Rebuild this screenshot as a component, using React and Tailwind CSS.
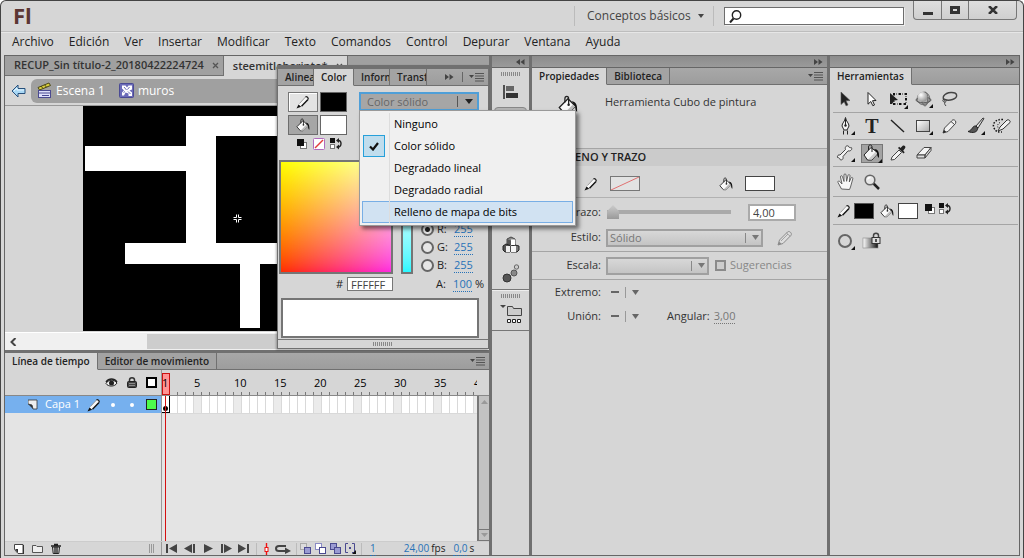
import { useState } from 'react';
import clsx from 'clsx';

const MENUS = ['Archivo', 'Edición', 'Ver', 'Insertar', 'Modificar', 'Texto', 'Comandos', 'Control', 'Depurar', 'Ventana', 'Ayuda'];
const FILL_TYPES = ['Ninguno', 'Color sólido', 'Degradado lineal', 'Degradado radial', 'Relleno de mapa de bits'];
const FRAMES = Array.from({ length: 40 }, (_, i) => i + 1);

/* ---------- icons ---------- */

function Svg({ w = 16, h = 16, className, children }) {
  return (
    <svg width={w} height={h} viewBox={`0 0 ${w} ${h}`} className={clsx('shrink-0', className)} fill="none" aria-hidden="true">
      {children}
    </svg>
  );
}

function PencilThin({ className }) {
  return (
    <Svg w={14} h={14} className={className}>
      <path d="M1.500 12.500L3 9l6.500-7c1-1 3.500.8 2.500 2.400L5.500 11z" fill="#f8f8f8" />
      <path d="M3.500 8.500L9.500 2" stroke="#888" strokeWidth=".8" />
      <path d="M5.500 11.300L12 4.500" stroke="#111" strokeWidth="1.400" />
      <path d="M9.500 2c1-1 3.500.8 2.500 2.400" stroke="#222" strokeWidth="1.300" />
      <path d="M.5 13.500L2.500 9.500l2.700 2.200z" fill="#111" />
    </Svg>
  );
}

function Pencil({ muted }) {
  const ink = muted ? '#8a8a8a' : '#444';
  return (
    <Svg>
      <path d="M1 15l1.500-5L10.500 2c1.500-1.500 5 1 3.500 3.300L6 13.500z" fill="#ddd" stroke={ink} />
      <path d="M1 15l1.300-3.300 2.200 2z" fill={ink} />
      <path d="M9.500 3l3.800 3.300M4 11l7-7" stroke={ink} strokeWidth=".7" />
    </Svg>
  );
}

function Bucket({ size = 14 }) {
  return (
    <svg width={size} height={size} viewBox="0 0 16 16" fill="none" className="shrink-0" aria-hidden="true">
      <path d="M1 10l7-7 6 6-6 5.500H5z" fill="#fafafa" stroke="#222" />
      <path d="M5 14.500L11.500 8 14 9l-5.500 5.500z" fill="#bbb" />
      <path d="M5.500 6V3c0-2.500 3-2.500 3 0v4.500" stroke="#222" />
      <circle cx="8.500" cy="7.800" r="1" fill="#222" />
      <path d="M11 5c3 .4 4.600 2 4.300 8.500-1.200-.8-1.600-2.500-1.500-4.500z" fill="#111" />
    </svg>
  );
}

function DefaultColors() {
  return (
    <Svg w={12} h={12}>
      <rect x="4.500" y="4.500" width="6" height="6" fill="#fff" stroke="#777" />
      <rect x="1" y="1" width="7" height="7" fill="#111" />
    </Svg>
  );
}

function NoColor() {
  return (
    <Svg w={12} h={12}>
      <rect x=".5" y=".5" width="11" height="11" rx="1" fill="#fff" stroke="#b06bbd" />
      <path d="M2 10l8-8" stroke="#e23b3b" strokeWidth="1.500" />
    </Svg>
  );
}

function SwapColors() {
  return (
    <Svg w={13} h={12}>
      <rect x="0" y="0" width="5" height="5" fill="#111" />
      <rect x=".5" y="6.500" width="4" height="4" fill="#fff" stroke="#777" />
      <path d="M8 2.500c4-.5 4 6.500 0 6.500" stroke="#222" strokeWidth="1.400" />
      <path d="M6 2.500L9 0v5zM6 9l3-2.500v5z" fill="#222" />
    </Svg>
  );
}

function Chevrons({ left, className }) {
  return (
    <Svg w={9} h={6} className={className}>
      {left
        ? <path d="M4 0L0 3l4 3zM8.500 0l-4 3 4 3z" fill="#444" />
        : <path d="M0 0l4 3-4 3zM4.500 0l4 3-4 3z" fill="#444" />}
    </Svg>
  );
}

function PanelMenu() {
  return (
    <button aria-label="Opciones del panel" className="flex">
      <Svg w={15} h={9}>
        <path d="M0 2h5L2.500 5z" fill="#444" />
        <path d="M6 .5h9M6 3h9M6 5.500h9M6 8h9" stroke="#555" />
      </Svg>
    </button>
  );
}

function Caret({ className }) {
  return (
    <svg viewBox="0 0 9 6" preserveAspectRatio="none" className={clsx('shrink-0', className)} aria-hidden="true">
      <path d="M0 0h9L4.500 6z" fill="currentColor" />
    </svg>
  );
}

function Grip({ className }) {
  return (
    <Svg w={20} h={4} className={className}>
      <path d="M.5 0v4M2.500 0v4M4.500 0v4M6.500 0v4M8.500 0v4M10.500 0v4M12.500 0v4M14.500 0v4M16.500 0v4M18.500 0v4" stroke="#888" />
    </Svg>
  );
}

const corner = <path d="M19 15v4h-4z" fill="#111" />;

// 20x20 tool glyphs
const TOOL_ICONS = {
  select: <path d="M5 3l9 8.500-4 .3 2 4.200-2 .8-1.800-4L5 15.500z" fill="#222" stroke="#555" strokeWidth=".6" />,
  subselect: <path d="M6 3.500l8 8-3.500.2 2 4.300-1.700.7-2-4.200-2.800 2.700z" fill="#fff" stroke="#222" />,
  transform: (
    <>
      <rect x="6" y="5" width="12" height="10" stroke="#222" strokeDasharray="1 1" />
      <path d="M2 4l8 7-3.500.5L4 15H2z" fill="#222" />
      <path d="M5 4h2v2H5zM11 4h2v2h-2zM17 4h2v2h-2zM17 9h2v2h-2zM11 14h2v2h-2zM5 14h2v2H5zM16 14h2v2h-2z" fill="#111" />
      <path d="M20 16v4h-4z" fill="#111" />
    </>
  ),
  rotate3d: (
    <>
      <circle cx="9.500" cy="9.500" r="6.300" fill="url(#ball)" stroke="#777" />
      <ellipse cx="9.500" cy="11" rx="7.500" ry="2.800" stroke="#555" />
      <ellipse cx="11" cy="10" rx="2.800" ry="7" stroke="#666" />
      <circle cx="8.500" cy="8" r="5" fill="url(#ball)" />
      {corner}
    </>
  ),
  lasso: (
    <>
      <path d="M5 11.500C1 9 4 4 11 3.500c7-.3 7.500 5 1.500 7-3 1-5.500 1-7.500 0" stroke="#444" strokeWidth="1.400" />
      <path d="M5 10c-3 0-3 3 0 3 2-.4 1.500-2.500 0-2.500M5 13c-1 2 0 2.500 1 4" stroke="#444" />
    </>
  ),
  pen: (
    <>
      <path d="M9.500 1.500c.5 4 3.500 5.500 3.500 8.500l-2 4H8l-2-4c0-3 3-4.500 3.500-8.500z" fill="#f5f5f5" stroke="#222" />
      <path d="M9.500 3v6M7.500 14.500v4M11.500 14.500v4" stroke="#222" />
      <circle cx="9.500" cy="9.500" r="1.200" fill="#222" />
      {corner}
    </>
  ),
  line: <path d="M3 4l13 12" stroke="#222" strokeWidth="1.400" />,
  rect: (
    <>
      <rect x="2.500" y="4.500" width="13" height="11" fill="url(#shade)" stroke="#444" />
      {corner}
    </>
  ),
  pencil: (
    <>
      <path d="M3 17l1.500-5L12 4.500c1.500-2 5 .5 3.500 3L8 15.500z" fill="#f2f2f2" stroke="#444" />
      <path d="M3 17l1.200-3 2 1.800z" fill="#222" />
      <path d="M11 5.500L14.500 8.500" stroke="#444" />
    </>
  ),
  brush: (
    <>
      <path d="M17 2l-7 8 2 2 6-9.500z" fill="#ddd" stroke="#333" />
      <path d="M10 10c-4-.5-3 4-8 5.500 5 2 9.500 1 9.800-3.500z" fill="#555" stroke="#222" />
      {corner}
    </>
  ),
  spray: (
    <>
      <path d="M6 15l2-4 7-7c1.500-1 4 1 3 2.500L11 13z" fill="#f2f2f2" stroke="#333" />
      <path d="M11 3.500C3 3 0 8 2 12s4 4 8 4" stroke="#111" strokeWidth="1.500" strokeDasharray="1.500 1.500" />
      <path d="M8 6.500c-2 1-3 3-2 5" stroke="#111" strokeDasharray="1 1.500" />
    </>
  ),
  bone: (
    <>
      <path d="M4 12l5.500-5.500C8.500 3.500 11 2 12.500 3.200c.3 1.500 1.500 1.500 3 1.500C16.500 7 14 8.500 12 7.800L7 13.500c.7 3-1.500 4-3 3-.3-1.500-1-1.800-2.500-2C1 12.500 2.500 11.500 4 12z" fill="#f2f2f2" stroke="#444" />
      {corner}
    </>
  ),
  bucket: (
    <>
      <path d="M2 12l7-7.500 7 5.500-6 7H5.500z" fill="#f5f5f5" stroke="#222" />
      <path d="M6 16.500l8-8 2 1.500-6 6.500z" fill="#ccc" />
      <path d="M6.500 7V4c0-2.800 3.500-2.800 3.500 0v5" stroke="#222" />
      <path d="M12 6c4 0 5.500 3 5 9-1.500-1-2-3-2-5z" fill="#111" />
      <path d="M20 16v4h-4z" fill="#111" />
    </>
  ),
  dropper: (
    <>
      <path d="M3 17l1-3 7-7 2.500 2.500-7 7z" fill="#f2f2f2" stroke="#444" />
      <path d="M10 5l5.500 5.500 1.200-1.200-1.500-1.600 2-2.700c.8-1.500-1-3.200-2.500-2.200L12.500 5l-1.300-1.200z" fill="#222" />
    </>
  ),
  eraser: (
    <>
      <path d="M3 12l7-7.500h7L11 12z" fill="#f5f5f5" stroke="#444" />
      <path d="M3 12h8v3H3zM11 12l6-7.500v3L11 15z" fill="#ddd" stroke="#444" />
    </>
  ),
  hand: (
    <path d="M5.500 17L2 10.500c-.7-1.300 1-2 1.800-1L6 12 4.500 5c-.2-1.500 1.500-1.800 2-.3L8 9.500 8 3c0-1.500 2-1.500 2 0l.6 6.300L12 3.500c.3-1.500 2.200-1 2 .5L13.300 10l1.700-4c.6-1.200 2.200-.6 1.800.8L14.500 15l-1 2.500z" fill="#f8f8f8" stroke="#555" strokeWidth=".9" />
  ),
  zoom: (
    <>
      <path d="M11 11l6 6" stroke="#222" strokeWidth="2.500" />
      <circle cx="8" cy="8" r="4.800" fill="#e6e6e6" stroke="#666" strokeWidth="1.600" />
      <path d="M5.500 7.500c.5-1.500 1.500-2 3-2" stroke="#fff" strokeWidth="1.300" />
    </>
  ),
  circle: (
    <>
      <circle cx="9" cy="10" r="6" stroke="#666" strokeWidth="2" />
      {corner}
    </>
  ),
  lockfill: (
    <>
      <rect x="1" y="7" width="15" height="10" fill="url(#lockgrad)" stroke="#888" strokeWidth=".6" />
      <path d="M11.500 7V4.500c0-3 5-3 5 0V7" stroke="#444" strokeWidth="1.500" />
      <rect x="10" y="6.500" width="8" height="6" fill="#ddd" stroke="#333" />
      <path d="M14 8v3" stroke="#222" strokeWidth="1.500" />
    </>
  ),
};

function Gradients() {
  return (
    <svg width="0" height="0" className="absolute" aria-hidden="true">
      <defs>
        <radialGradient id="ball" cx=".35" cy=".3" r=".8"><stop stopColor="#fff" /><stop offset="1" stopColor="#888" /></radialGradient>
        <linearGradient id="shade" x2="1" y2="1"><stop stopColor="#fff" /><stop offset="1" stopColor="#aaa" /></linearGradient>
        <linearGradient id="lockgrad"><stop stopColor="#fff" /><stop offset="1" stopColor="#111" /></linearGradient>
      </defs>
    </svg>
  );
}

/* ---------- shared pieces ---------- */

function Tab({ active, className, children }) {
  return (
    <button className={clsx('h-full overflow-hidden whitespace-nowrap border-b border-r border-r-[#707070] px-[7px] text-left text-[10px] font-semibold leading-4',
      active ? 'border-b-[#d6d6d6] bg-[#d6d6d6] text-[#222]' : 'border-b-[#707070] bg-[#a3a3a3] text-[#222]', className)}>
      {children}
    </button>
  );
}

function TabBar({ children, end }) {
  return (
    <div className="flex h-[17px] shrink-0 bg-linear-to-b from-[#a8a8a8] to-[#9c9c9c]">
      {children}
      <div className="flex flex-1 items-center justify-end gap-1.5 border-b border-[#707070] pr-1">{end}</div>
    </div>
  );
}

function DockBar({ left }) {
  return (
    <div className="flex h-3 shrink-0 items-center justify-end border-b border-[#666] bg-linear-to-b from-[#8c8c8c] to-[#9a9a9a] pr-1">
      <Chevrons left={left} />
    </div>
  );
}

function Scrub({ muted, children, label }) {
  return (
    <button aria-label={label} className={clsx('border-b border-dotted leading-[14px]', muted ? 'border-[#777] text-[#777]' : 'border-[#2672b8] text-[#2672b8]')}>
      {children}
    </button>
  );
}

function Dropdown({ id, label, value, options, className, caretClass }) {
  return (
    <span className={clsx('relative flex', className)}>
      <select id={id} aria-label={label} defaultValue={value}
        className="h-[18px] w-full appearance-none border-2 border-[#a0a0a0] bg-linear-to-b from-[#d8d8d8] to-[#c4c4c4] pl-[2px] leading-[14px] text-[#777]">
        {options.map((o) => <option key={o}>{o}</option>)}
      </select>
      <span className="pointer-events-none absolute inset-y-1 right-1 flex w-[14px] items-center justify-end border-l border-[#888]">
        <Caret className={caretClass} />
      </span>
    </span>
  );
}

/* ---------- window header ---------- */

function TitleBar() {
  return (
    <div className="flex h-[31px] shrink-0 items-start border-b border-[#bdbdbd] pl-3 pr-1.5 shadow-[0_1px_0_#e6e6e6]">
      <h1 className="text-[22px] font-bold leading-7 text-[#5c3634]">Fl</h1>
      <div className="ml-auto flex h-[30px] items-center">
        <div className="flex h-5 w-[140px] items-center gap-[7px] border-x border-[#bbb] pl-3 text-[#444]">
          <button className="text-xs">Conceptos básicos</button>
          <Caret className="h-[4px] w-[6px]" />
        </div>
        <label className="ml-[10px] flex h-[18px] w-[180px] items-center border border-[#6d6d6d] bg-white pl-1 shadow-[1px_1px_0_#eee]">
          <Svg w={13} h={13}>
            <circle cx="7.500" cy="5" r="4.200" stroke="#222" strokeWidth="1.400" />
            <path d="M4.500 8.500L1 12.500" stroke="#222" strokeWidth="2" />
          </Svg>
          <input type="search" aria-label="Buscar" className="w-full bg-transparent px-1 outline-none" />
        </label>
      </div>
      <div className="ml-[9px] flex h-[19px] divide-x divide-[#777] overflow-hidden rounded-b border border-t-0 border-[#777] bg-linear-to-b from-[#dedede] to-[#cfcfcf]">
        <button aria-label="Minimizar" className="flex w-7 items-center justify-center"><Svg w={10} h={12}><path d="M0 8h10v3H0z" fill="#333" /></Svg></button>
        <button aria-label="Maximizar" className="flex w-[27px] items-center justify-center"><Svg w={10} h={8}><rect x="1.500" y="1.500" width="7" height="5" stroke="#333" strokeWidth="3" /></Svg></button>
        <button aria-label="Cerrar" className="flex w-[47px] items-center justify-center"><Svg w={10} h={8}><path d="M1 0l8 8M9 0L1 8" stroke="#333" strokeWidth="2.500" /></Svg></button>
      </div>
    </div>
  );
}

function MenuBar() {
  return (
    <nav className="flex h-[23px] shrink-0 items-start gap-[15px] pl-[11px] pt-px text-xs text-[#222]">
      {MENUS.map((m) => <button key={m} className="leading-[18px]">{m}</button>)}
    </nav>
  );
}

/* ---------- document ---------- */

function DocTab({ active, children }) {
  return (
    <div className={clsx('flex items-center gap-2 border-r border-[#707070] pl-[9px] pr-1 text-[11px] font-semibold text-[#333]',
      active ? 'bg-[#d6d6d6]' : 'border-b')}>
      <button className="whitespace-nowrap">{children}</button>
      <button aria-label="Cerrar documento" className="flex"><Svg w={7} h={7}><path d="M1 1l5 5M6 1L1 6" stroke="#555" strokeWidth="1.300" /></Svg></button>
    </div>
  );
}

function Document() {
  return (
    <section className="flex flex-col bg-[#d6d6d6]">
      <div className="flex h-5 bg-[#a0a0a0]">
        <DocTab>RECUP_Sin título-2_20180422224724</DocTab>
        <DocTab active>steemitlaberinto*</DocTab>
        <div className="flex-1 border-b border-[#707070]" />
      </div>
      <div className="flex h-[30px] items-center gap-[5px] border-b border-[#999] pl-1.5">
        <button aria-label="Atrás" className="flex">
          <Svg w={15} h={14}>
            <path d="M1 7l6-6v3.500h7v5H7V13z" fill="#a9d8f5" stroke="#27507c" />
            <path d="M3 7l3-3v2h7" stroke="#e6f6ff" />
          </Svg>
        </button>
        <div className="flex h-6 flex-1 items-center rounded-l-md bg-[#a0a0a0] pl-1.5 text-xs text-white">
          <a href="#escena" className="flex items-center gap-1">
            <Svg w={15} h={17}>
              <path d="M1 5.500L12 1l1.500 2.500L2.500 8z" fill="#d9cf3d" stroke="#4b4717" />
              <path d="M4 4l2 2.500M7.500 2.700l2 2.500" stroke="#4b4717" />
              <rect x="1.500" y="8.500" width="12" height="7" fill="#dfe0fa" stroke="#4b4a90" />
              <path d="M2 11h11M5 13.500h7" stroke="#4b4a90" />
            </Svg>
            Escena 1
          </a>
          <a href="#muros" className="ml-[14px] flex items-center gap-1">
            <Svg w={15} h={15}>
              <rect x=".5" y=".5" width="14" height="14" rx="1" fill="#6b6bb8" stroke="#4a4a94" />
              <path d="M3 2.500h3.500l1.500 2 1.500-2H13v4l-2.500 1 2.500 2V13H9.500V10.500l-3-1-1.500 3H3v-3l2-2-2-2z" fill="#fff" />
              <path d="M5 4l2.500 3M10.500 4l-2 2.500M9 8.500l2.500 2.500M4.500 9.500l1.500-1" stroke="#6b6bb8" />
            </Svg>
            muros
          </a>
        </div>
      </div>
      <div className="h-[226px] overflow-hidden pl-[78px]">
        {/* walls of the maze symbol */}
        <svg width="500" height="226" viewBox="0 0 500 226" aria-label="muros">
          <rect width="500" height="225" fill="#000" />
          <path d="M103 10H470V30H133V137H470V158H177V222H157V158H42V137H103V65H2V40H103z" fill="#fff" />
          <path d="M150.500 111.500h3v-3M158.500 111.500h-3v-3M150.500 113.500h3v3M158.500 113.500h-3v3" stroke="#fff" fill="none" />
        </svg>
      </div>
      <div className="flex h-[18px] items-center border-t border-white bg-[#f0f0f0]">
        <button aria-label="Desplazar a la izquierda" className="flex w-[142px] pl-[5px]">
          <Svg w={7} h={8}><path d="M5.500 0L1.500 4l4 4" stroke="#444" strokeWidth="2" /></Svg>
        </button>
        <div className="h-[15px] flex-1 bg-[#cdcdcd]" />
      </div>
    </section>
  );
}

/* ---------- timeline ---------- */

function Transport({ label, d }) {
  return (
    <button aria-label={label} className="flex"><Svg w={12} h={9}><path d={d} fill="#444" /></Svg></button>
  );
}

function Timeline() {
  return (
    <section className="relative flex min-h-0 flex-1 flex-col bg-[#d6d6d6]">
      <TabBar end={<PanelMenu />}>
        <Tab active>Línea de tiempo</Tab>
        <Tab>Editor de movimiento</Tab>
      </TabBar>

      <div className="flex h-[26px] shrink-0 border-b border-[#888]">
        <div className="flex w-[157px] shrink-0 items-center justify-end gap-[9px] border-r border-[#999] pr-1">
          <Svg w={13} h={10}>
            <path d="M1 5.500C3 1.500 9 1 12 5c-2 4-9 4-11 .5z" fill="#eee" stroke="#222" />
            <circle cx="6.500" cy="5" r="2.500" fill="#222" />
            <path d="M1 4C4 0 9 0 12 4" stroke="#222" strokeWidth="1.400" />
          </Svg>
          <Svg w={10} h={11}>
            <path d="M2.500 5V3c0-3 5-3 5 0v2" stroke="#333" strokeWidth="1.500" />
            <rect x=".5" y="4.500" width="9" height="6" rx="1" fill="#444" stroke="#222" />
            <path d="M2 6.500h6M2 8.500h6" stroke="#888" />
          </Svg>
          <Svg w={11} h={11}><rect x="1" y="1" width="9" height="9" fill="#fff" stroke="#000" strokeWidth="2" /></Svg>
        </div>
        <div className="flex min-w-0 flex-1 overflow-hidden pr-3">
          <div className="flex min-w-0 flex-1 overflow-hidden">
            {FRAMES.map((f) => (
              <div key={f} className="relative w-2 shrink-0">
                <span className="absolute bottom-0 right-0 h-[3px] w-px bg-[#777]" />
                {f === 1 && <span className="absolute inset-x-0 bottom-0 top-[3px] border border-[#c11] bg-[#ff9494]" />}
                {(f === 1 || f % 5 === 0) && <span className="absolute left-0 top-[5px] text-[11px] leading-4 text-black">{f}</span>}
              </div>
            ))}
          </div>
        </div>
      </div>

      <div className="flex min-h-0 flex-1 bg-[#e4e4e4]">
        <div className="w-[157px] shrink-0 border-r border-[#999]">
          <div className="flex h-[17px] items-center justify-end bg-[#76b0ee] pr-1 text-[11px] text-white">
            <Svg w={10} h={11} className="mr-[7px]">
              <path d="M0 1h9v9H5L4 6 0 5z" fill="#eee" stroke="#333" strokeWidth=".8" />
              <path d="M0 5l4 1 1 4z" fill="#333" />
            </Svg>
            Capa 1
            <span className="ml-[7px] flex"><PencilThin /></span>
            <span className="ml-[10px] size-[4px] rounded-full bg-white" />
            <span className="ml-[15px] size-[4px] rounded-full bg-white" />
            <span className="ml-3 size-[11px] border border-[#222] bg-[#4dfa4d]" />
          </div>
        </div>
        <div className="relative min-w-0 flex-1 overflow-hidden">
          <div className="flex h-[18px] overflow-hidden border-b border-[#d9d9d9]">
            {FRAMES.map((f) => (
              <div key={f} className={clsx('w-2 shrink-0 border-r', f === 1 ? 'border-b border-black bg-white' : 'border-[#d9d9d9]', f % 5 === 0 ? 'bg-[#ebebeb]' : 'bg-white')}>
                {f === 1 && <span className="ml-px mt-[10px] block size-[5px] rounded-full bg-black" />}
              </div>
            ))}
          </div>
          <span className="absolute inset-y-0 left-[3px] w-px bg-[#d41010]" />
        </div>
        <div className="flex w-3 shrink-0 flex-col justify-between border-l-2 border-[#777] bg-[#c2c2c2] text-[#999]">
          <button aria-label="Subir" className="flex h-3 items-center justify-center"><Caret className="h-[4px] w-[7px] rotate-180" /></button>
          <button aria-label="Bajar" className="flex h-3 items-center justify-center border-y border-[#777]"><Caret className="h-[4px] w-[7px]" /></button>
        </div>
      </div>

      <div className="flex h-[14px] shrink-0 items-center border-t border-[#ccc] text-[11px]">
        <div className="flex h-full w-[157px] shrink-0 items-center gap-2 border-r border-[#999] pl-[9px] pr-[6px]">
          <button aria-label="Nueva capa" className="flex"><Svg w={10} h={10}><path d="M.5.500h8.500v9h-5l-3.500-4z" fill="#fff" stroke="#444" /><path d="M1 5h3v4z" fill="#333" /><path d="M9.500 1v9" stroke="#333" /></Svg></button>
          <button aria-label="Nueva carpeta" className="flex"><Svg w={11} h={9}><path d="M.5 1.500H4l1 1h5.500v6H.5z" fill="#eee" stroke="#555" /></Svg></button>
          <button aria-label="Eliminar" className="flex"><Svg w={10} h={11}><path d="M1.500 4h7l-.7 6.500H2.200z" fill="#ddd" stroke="#222" /><path d="M0 3h10M3 1.500h4M4 4v6M6 4v6" stroke="#222" strokeWidth="1.300" /></Svg></button>
          <Svg w={6} h={9} className="ml-auto"><path d="M.5 0v9M2.500 0v9M4.500 0v9" stroke="#999" /></Svg>
        </div>
        <div className="flex items-center gap-[6px] pl-1">
          <Transport label="Ir al primer fotograma" d="M0 0h2v9H0zM11 0v9L3 4.500z" />
          <Transport label="Retroceder" d="M8 0v9L0 4.500zM9 0h2v9H9z" />
          <Transport label="Reproducir" d="M2 0l9 4.500L2 9z" />
          <Transport label="Avanzar" d="M1 0h2v9H1zM4 0l8 4.500L4 9z" />
          <Transport label="Ir al último fotograma" d="M0 0l8 4.500L0 9zM9 0h2v9H9z" />
        </div>
        <span className="mx-[6px] h-3 w-px bg-[#bbb]" />
        <Svg w={7} h={12} className="mr-[5px]"><path d="M3.500 0v12" stroke="#e11" strokeWidth="1.400" /><rect x="2" y="4.500" width="3" height="4" fill="#fff" stroke="#e11" /></Svg>
        <Svg w={16} h={10}><path d="M11 2H4C0 2 0 7 4 7h7" stroke="#444" strokeWidth="2" /><path d="M10 3.500l6 3.500-6 3z" fill="#444" /></Svg>
        <span className="ml-[5px] mr-[3px] h-3 w-px bg-[#bbb]" />
        <div className="flex gap-[4px]">
          <Svg w={11} h={11}><rect x=".5" y=".5" width="6" height="6" fill="#ddd" stroke="#aaa" /><rect x="4.500" y="4.500" width="6" height="6" fill="#9a9ad2" stroke="#4b4a90" /></Svg>
          <Svg w={11} h={11}><rect x=".5" y=".5" width="6" height="6" fill="#fff" stroke="#8a8ac4" /><rect x="4.500" y="4.500" width="6" height="6" fill="#fff" stroke="#4b4a90" /></Svg>
          <Svg w={11} h={11}><rect x=".5" y=".5" width="6" height="6" fill="#9a9ad2" stroke="#4b4a90" /><rect x="4.500" y="4.500" width="6" height="6" fill="#9a9ad2" stroke="#4b4a90" /></Svg>
          <Svg w={11} h={11}><path d="M3 .5H.5v9H3M7 .5h2.500v9H7" stroke="#4b4a90" /><rect x="4" y="4" width="2" height="2" fill="#4b4a90" /><path d="M11 7v4H7z" fill="#111" /></Svg>
        </div>
        <span className="ml-[5px] h-3 w-px bg-[#bbb]" />
        <span className="ml-2 flex text-[10px]"><Scrub label="Fotograma actual">1</Scrub></span>
        <span className="ml-7 flex text-[10px]"><Scrub label="Velocidad">24,00</Scrub><span className="ml-0.5">fps</span></span>
        <span className="ml-2 flex text-[10px]"><Scrub label="Tiempo">0,0</Scrub><span className="ml-0.5">s</span></span>
      </div>
    </section>
  );
}

/* ---------- floating color panel ---------- */

function FillMenu({ value, onPick }) {
  return (
    <ul role="listbox" aria-label="Tipo de relleno" className="absolute left-[81px] top-[41px] z-20 w-[217px] border border-[#999] bg-[#f0f0f0] p-0.5 text-[11px] text-black shadow-[3px_3px_4px_rgba(0,0,0,.5)]">
      {FILL_TYPES.map((t) => (
        <li key={t} role="option" aria-selected={t === value} onClick={() => onPick(t)}
          className={clsx('flex h-[22px] items-center border', t === FILL_TYPES[4] ? 'border-[#78aee5] bg-[#d1e2f2]' : 'border-transparent')}>
          <span className={clsx('flex size-[22px] shrink-0 items-center justify-center', t === value && 'border border-[#26a0da] bg-[#c0dded]')}>
            {t === value && <Svg w={10} h={9}><path d="M1 4.500l3 3L9 1" stroke="#111" strokeWidth="2.200" /></Svg>}
          </span>
          <span className="ml-1 flex h-[22px] items-center border-l border-[#ddd] pl-1">{t}</span>
        </li>
      ))}
    </ul>
  );
}

function Channel({ name, value, checked }) {
  return (
    <div className="flex h-[18px] items-center">
      {name === 'A'
        ? <span className="w-[13px]" />
        : <input type="radio" name="channel" aria-label={name} defaultChecked={checked}
            className="size-[13px] appearance-none rounded-full border-2 border-[#666] bg-[#e6e6e6] checked:bg-[radial-gradient(circle,#222_2px,#e6e6e6_3px)]" />}
      <span className="ml-[3px] w-[17px]">{name}:</span>
      <Scrub label={`Valor ${name}`}>{value}</Scrub>
      {name === 'A' && <span className="ml-[3px]">%</span>}
    </div>
  );
}

function ColorPanel() {
  const [fill, setFill] = useState('Color sólido');
  return (
    <section className="absolute right-0 top-[9px] z-10 flex w-[212px] flex-col border border-t-4 border-[#707070] bg-[#d6d6d6] text-[11px] text-[#222] shadow-[-1px_1px_2px_rgba(0,0,0,.3)]">
      <TabBar end={<><Chevrons className="mr-0.5" /><span className="h-[10px] w-px bg-[#666]" /><PanelMenu /></>}>
        <Tab className="w-9">Alinear</Tab>
        <Tab active className="w-10">Color</Tab>
        <Tab className="w-9">Información</Tab>
        <Tab className="w-[37px]">Transformar</Tab>
      </TabBar>

      <div className="flex h-[74px] items-start pl-[10px] pr-[9px] pt-[6px]">
        <div className="grid grid-cols-[30px_27px] gap-x-[2px] gap-y-[3px]">
          <button aria-label="Color de trazo" className="flex h-5 items-center justify-center border border-[#777] bg-[#e3e3e3] shadow-[inset_1px_1px_0_#fff]"><PencilThin /></button>
          <button aria-label="Negro" className="h-5 border border-[#666] bg-black" />
          <button aria-label="Color de relleno" className="flex h-5 items-center justify-center border border-[#6d6d6d] bg-[#a6a6a6]"><Bucket /></button>
          <button aria-label="Blanco" className="h-5 border border-[#666] bg-white" />
          <div className="col-span-2 flex gap-[5px] pl-2">
            <DefaultColors /><NoColor /><SwapColors />
          </div>
        </div>
        <span className="relative ml-auto flex w-[120px]">
          <select aria-label="Tipo de color" value={fill} onChange={(e) => setFill(e.target.value)}
            className="h-[19px] w-full appearance-none border-2 border-[#4f9fd8] bg-[#a6a6a6] pl-1.5 text-[11px] leading-[14px] text-[#666] outline-none">
            {FILL_TYPES.map((t) => <option key={t}>{t}</option>)}
          </select>
          <span className="pointer-events-none absolute inset-y-1 right-1.5 flex w-4 items-center justify-end border-l border-[#555] text-[#222]">
            <Caret className="h-[5px] w-[8px]" />
          </span>
        </span>
      </div>

      <div className="flex gap-2 pl-px">
        <div className="size-[114px] border-2 border-[#757575] bg-linear-to-b from-[#ffffc0] to-[#ff28e0]">
          <div className="h-full bg-linear-to-b from-[#ff0] to-[#ff2a00] [mask-image:linear-gradient(to_right,#000,transparent)]" />
        </div>
        <div className="w-3 border-2 border-[#757575] bg-linear-to-b from-white to-[#28f8ff]" />
        <div className="flex flex-col justify-end">
          <Channel name="R" value="255" checked />
          <Channel name="G" value="255" />
          <Channel name="B" value="255" />
        </div>
      </div>
      <div className="mb-1 flex h-5 items-center pl-[58px]">
        <label htmlFor="hex" className="mr-1">#</label>
        <input id="hex" defaultValue="FFFFFF" className="h-[14px] w-[46px] border border-[#777] bg-white pl-[3px] text-[11px] leading-3 text-[#444]" />
        <span className="ml-[27px]"><Channel name="A" value="100" /></span>
      </div>
      <div className="ml-[3px] mr-[9px] h-10 border-2 border-[#757575] bg-white" />
      <div className="mt-px flex h-[9px] items-center justify-center border-t border-[#777]"><Grip /></div>

      <FillMenu value={fill} onPick={setFill} />
    </section>
  );
}

/* ---------- docked panels ---------- */

function IconDock() {
  return (
    <aside className="flex w-[37px] shrink-0 flex-col bg-[#d6d6d6]">
      <DockBar left />
      <div className="flex h-[222px] flex-col items-center border-b border-[#777] pb-1.5 pt-1">
        <Grip />
        <button aria-label="Alinear" className="mt-[9px] flex">
          <Svg w={16} h={14}><path d="M1 0v14" stroke="#222" strokeWidth="1.500" /><rect x="3" y="1" width="8" height="5" fill="#666" /><rect x="3" y="8" width="12" height="5" fill="#333" /></Svg>
        </button>
        <button aria-label="Color" className="mt-2 h-[26px] w-[33px] rounded border border-[#888] bg-[#b5b5b5]" />
        <button aria-label="Componentes" className="mb-[11px] mt-auto flex">
          <Svg w={18} h={17}>
            <path d="M5 3l4-2 4 2v6H5z" fill="#888" stroke="#444" /><path d="M5 3l4 1.500V9H5z" fill="#555" />
            <path d="M1 10l3-2 4 1.500V16H3l-2-2z" fill="#555" stroke="#222" /><path d="M4 10h4v6H4z" fill="#eee" />
            <path d="M9 10l4-1 4 1v4l-2 2H9z" fill="#777" stroke="#222" /><path d="M9 10h5v6H9z" fill="#f5f5f5" />
            <path d="M9 3.500h4V9H9z" fill="#fff" />
          </Svg>
        </button>
        <button aria-label="Configuración de movimiento" className="flex">
          <Svg w={18} h={19}><circle cx="5" cy="14" r="4" fill="#555" stroke="#333" /><circle cx="12" cy="9" r="3" fill="#888" stroke="#555" /><circle cx="14.500" cy="3" r="2.200" fill="#ccc" stroke="#666" /></Svg>
        </button>
      </div>
      <div className="flex h-[41px] flex-col items-center gap-[7px] border-b border-t border-b-[#777] border-t-[#eee] pt-[3px]">
        <Grip />
        <button aria-label="Proyecto" className="flex">
          <Svg w={22} h={19}>
            <path d="M0 0h6L3 3z" fill="#444" />
            <path d="M7.500 1.500h5l1 2h8v7h-14z" fill="#ccc" stroke="#444" />
            <path d="M7.500 14.500h3v3h-3zM12.500 14.500h3v3h-3zM17.500 14.500h3v3h-3z" fill="#fff" stroke="#222" />
          </Svg>
        </button>
      </div>
    </aside>
  );
}

function JoinPicker({ label }) {
  return (
    <button aria-label={label} className="flex items-center gap-[6px] pl-[5px] text-[#666]">
      <span className="h-0.5 w-2 bg-[#666]" />
      <span className="h-[11px] w-px bg-[#999]" />
      <Caret className="h-[5px] w-[7px]" />
    </button>
  );
}

function Properties() {
  return (
    <section className="flex w-[295px] shrink-0 flex-col bg-[#d6d6d6] text-[11px] text-[#333]">
      <DockBar />
      <TabBar end={<PanelMenu />}>
        <Tab active>Propiedades</Tab>
        <Tab>Biblioteca</Tab>
      </TabBar>
      <div className="flex h-16 items-start gap-[27px] border-b border-[#a5a5a5] pl-[26px] pt-[10px]">
        <Bucket size={20} />
        <p className="leading-[14px]">Herramienta Cubo de pintura</p>
      </div>
      <h2 className="flex h-[17px] items-center gap-1 bg-[#cbcbcb] pl-[7px] font-semibold text-[#222]"><Caret className="h-[5px] w-[7px]" />RELLENO Y TRAZO</h2>
      <div className="flex h-8 items-center border-b border-[#b2b2b2] pl-[52px] pt-[4px]">
        <PencilThin />
        <button aria-label="Trazo: ninguno" className="ml-3 flex h-[15px] w-[30px] border border-[#777] bg-[#e2e2e2]">
          <Svg w={28} h={13}><path d="M0 13L28 0" stroke="#e07070" /></Svg>
        </button>
        <span className="ml-[79px] flex"><Bucket /></span>
        <button aria-label="Relleno: blanco" className="ml-3 h-[15px] w-[30px] border border-[#444] bg-white" />
      </div>
      <div className="border-b border-[#a5a5a5] pb-0.5">
        <div className="flex h-7 items-center">
          <label htmlFor="trazo" className="w-[69px] text-right">Trazo:</label>
          <input id="trazo" type="range" defaultValue="0"
            className="ml-[6px] h-[14px] w-[124px] appearance-none bg-[linear-gradient(#aaa,#aaa)] bg-[length:100%_4px] bg-center bg-no-repeat [&::-webkit-slider-thumb]:h-[14px] [&::-webkit-slider-thumb]:w-[12px] [&::-webkit-slider-thumb]:appearance-none [&::-webkit-slider-thumb]:bg-[linear-gradient(#ccc,#9a9a9a)] [&::-webkit-slider-thumb]:[clip-path:polygon(50%_0,100%_45%,100%_100%,0_100%,0_45%)]" />
          <input aria-label="Grosor" defaultValue="4,00" className="ml-[17px] h-[17px] w-12 border-2 border-[#aaa] bg-white pl-[3px] leading-3 text-[#444]" />
        </div>
        <div className="flex h-[23px] items-center">
          <label htmlFor="estilo" className="w-[69px] text-right">Estilo:</label>
          <Dropdown id="estilo" value="Sólido" options={['Sólido']} className="ml-[5px] w-[157px]" caretClass="h-[5px] w-[7px] text-[#777]" />
          <button aria-label="Editar estilo" className="ml-[14px] flex"><Pencil muted /></button>
        </div>
      </div>
      <div className="flex h-7 items-center border-b border-[#a5a5a5]">
        <label htmlFor="escala" className="w-[69px] text-right">Escala:</label>
        <Dropdown id="escala" value="" options={['']} className="ml-[5px] w-[103px]" caretClass="h-[5px] w-[7px] text-[#777]" />
        <label className="ml-1.5 flex items-center gap-1 text-[#888]">
          <input type="checkbox" className="size-[11px] appearance-none border-2 border-[#8a8a8a] bg-[#ccc]" />
          Sugerencias
        </label>
      </div>
      <div className="flex h-6 items-center">
        <span className="w-[69px] text-right">Extremo:</span>
        <span className="pl-[5px]"><JoinPicker label="Extremo" /></span>
      </div>
      <div className="flex h-6 items-center">
        <span className="w-[69px] text-right">Unión:</span>
        <span className="pl-[5px]"><JoinPicker label="Unión" /></span>
        <span className="ml-7 mr-1">Angular:</span>
        <Scrub muted label="Angular">3,00</Scrub>
      </div>
    </section>
  );
}

function Tool({ icon, label, active }) {
  return (
    <button aria-label={label} className={clsx('mx-[2px] flex h-[19px] w-[22px] items-center justify-center', active && 'border border-[#777] bg-[#a3a3a3]')}>
      <Svg w={20} h={20}>{TOOL_ICONS[icon]}</Svg>
    </button>
  );
}

function Tools() {
  return (
    <section className="flex w-[189px] shrink-0 flex-col bg-[#d6d6d6]">
      <DockBar />
      <TabBar>
        <Tab active>Herramientas</Tab>
      </TabBar>
      <div className="flex flex-col divide-y divide-[#a5a5a5] pl-[3px] pr-px">
        <div className="flex h-7 items-center">
          <Tool icon="select" label="Selección" />
          <Tool icon="subselect" label="Subselección" />
          <Tool icon="transform" label="Transformación libre" />
          <Tool icon="rotate3d" label="Rotación 3D" />
          <Tool icon="lasso" label="Lazo" />
        </div>
        <div className="flex h-[27px] items-center">
          <Tool icon="pen" label="Pluma" />
          <button aria-label="Texto" className="mx-[2px] w-[22px] text-center font-['Liberation_Serif',serif] text-[20px] font-bold leading-5 text-[#222]">T</button>
          <Tool icon="line" label="Línea" />
          <Tool icon="rect" label="Rectángulo" />
          <Tool icon="pencil" label="Lápiz" />
          <Tool icon="brush" label="Pincel" />
          <Tool icon="spray" label="Deco" />
        </div>
        <div className="flex h-[27px] items-center">
          <Tool icon="bone" label="Hueso" />
          <Tool icon="bucket" label="Cubo de pintura" active />
          <Tool icon="dropper" label="Cuentagotas" />
          <Tool icon="eraser" label="Borrador" />
        </div>
        <div className="flex h-[30px] items-center">
          <Tool icon="hand" label="Mano" />
          <Tool icon="zoom" label="Zoom" />
        </div>
        <div className="flex h-7 items-center pl-1">
          <PencilThin />
          <button aria-label="Color de trazo" className="ml-[3px] h-4 w-5 border border-[#555] bg-black" />
          <span className="ml-1.5 flex"><Bucket /></span>
          <button aria-label="Color de relleno" className="ml-1 h-4 w-5 border border-[#444] bg-white" />
          <span className="ml-1.5 flex gap-[3px] self-start pt-[6px]"><DefaultColors /><SwapColors /></span>
        </div>
        <div className="flex h-8 items-center">
          <Tool icon="circle" label="Tamaño de espacio" />
          <Tool icon="lockfill" label="Bloquear relleno" />
        </div>
      </div>
    </section>
  );
}

export default function App() {
  return (
    <div className="flex h-screen min-h-[500px] flex-col overflow-hidden rounded-t-md border border-b-0 border-[#444] bg-[#d6d6d6] pb-0.5 font-['Open_Sans','Noto_Sans',sans-serif] text-[11px] text-[#222]">
      <Gradients />
      <TitleBar />
      <MenuBar />
      <main className="mx-[3px] flex min-h-0 flex-1 gap-[3px] border border-[#666] bg-[#707070]">
        <div className="relative flex min-w-0 flex-1 flex-col gap-[3px]">
          <Document />
          <Timeline />
          <ColorPanel />
        </div>
        <IconDock />
        <Properties />
        <Tools />
      </main>
    </div>
  );
}
